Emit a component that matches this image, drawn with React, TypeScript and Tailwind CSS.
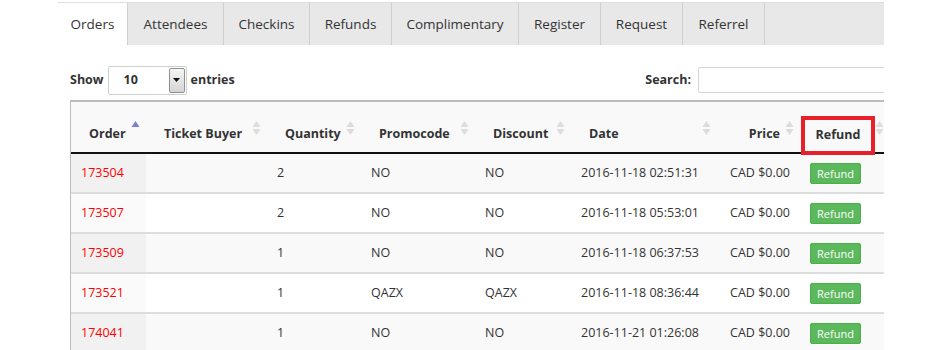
import React from 'react';

const tabs = ['Orders', 'Attendees', 'Checkins', 'Refunds', 'Complimentary', 'Register', 'Request', 'Referrel'];
const tabWidths = ['w-[70px]', 'w-[96px]', 'w-[86px]', 'w-[82px]', 'w-[127px]', 'w-[82px]', 'w-[82px]', 'w-[82px]'];

const rows = [
    { order: '173504', qty: '2', promo: 'NO', discount: 'NO', date: '2016-11-18 02:51:31' },
    { order: '173507', qty: '2', promo: 'NO', discount: 'NO', date: '2016-11-18 05:53:01' },
    { order: '173509', qty: '1', promo: 'NO', discount: 'NO', date: '2016-11-18 06:37:53' },
    { order: '173521', qty: '1', promo: 'QAZX', discount: 'QAZX', date: '2016-11-18 08:36:44' },
    { order: '174041', qty: '1', promo: 'NO', discount: 'NO', date: '2016-11-21 01:26:08' },
];

const SortIcon = ({ active }: { active?: boolean }) => (
    <svg width="9" height="16" viewBox="0 0 9 16" className="shrink-0">
        <path d="M4.5 1 L8.5 7 L0.5 7 Z" fill={active ? '#7b7fd6' : '#dcdcdc'} />
        {!active && <path d="M4.5 15 L8.5 9 L0.5 9 Z" fill="#dcdcdc" />}
    </svg>
);

const headers = [
    { label: 'Order', w: 'w-[75px]', active: true },
    { label: 'Ticket Buyer', w: 'w-[121px]' },
    { label: 'Quantity', w: 'w-[94px]' },
    { label: 'Promocode', w: 'w-[114px]' },
    { label: 'Discount', w: 'w-[96px]' },
    { label: 'Date', w: 'w-[146px]' },
    { label: 'Price', w: 'w-[83px]', right: true },
    { label: 'Refund', w: 'w-[100px]', boxed: true },
];

export default function App() {
    return (
        <div className="w-[950px] h-[350px] bg-white overflow-hidden font-['Open_Sans',sans-serif] text-[#333]">
            <div className="ml-[58px] w-[826px] overflow-hidden">
                {/* Tabs */}
                <div className="mt-[2px] h-[43px] flex bg-[#e8e8e8] border-t border-[#dedede]">
                    {tabs.map((t, i) => (
                        <div
                            key={t}
                            className={`${tabWidths[i]} h-full flex items-center justify-center text-[13.5px] border-r border-[#cfcfcf] ${i === 0 ? 'bg-white' : ''}`}
                        >
                            {t}
                        </div>
                    ))}
                </div>

                {/* Controls */}
                <div className="mt-[20px] flex items-center justify-between pl-[12px] h-[30px]">
                    <div className="flex items-center gap-[4px] text-[12.5px] font-bold">
                        <span>Show</span>
                        <div className="relative w-[79px] h-[29px] border border-[#cfcfcf] rounded-[2px] bg-white flex items-center">
                            <span className="ml-[15px] text-[12.5px] font-bold text-[#333]">10</span>
                            <div className="absolute right-[1px] top-[1px] bottom-[1px] w-[16px] border border-[#8f8f8f] rounded-[2px] bg-gradient-to-b from-[#f6f6f6] to-[#d4d4d4] flex items-center justify-center">
                                <svg width="7" height="4" viewBox="0 0 7 4"><path d="M0 0 L7 0 L3.5 4 Z" fill="#111" /></svg>
                            </div>
                        </div>
                        <span>entries</span>
                    </div>
                    <div className="flex items-center gap-[7px] text-[12.5px] font-bold">
                        <span>Search:</span>
                        <div className="w-[200px] h-[26px] border border-[#d4d4d4] rounded-[2px] bg-white -mr-[14px]" />
                    </div>
                </div>

                {/* Table */}
                <div className="mt-[5px] ml-[12px] w-[830px] border-l border-t-2 border-[#bdbdbd]">
                    <div className="flex h-[52px] bg-[#f9f9f9] border-b-2 border-[#111]">
                        {headers.map((h) => (
                            <div key={h.label} className={`${h.w} relative flex items-end pb-[8px] text-[12.5px] font-bold ${h.right ? 'justify-end pr-[6px]' : 'pl-[18px] pr-[6px] justify-between'}`}>
                                {h.boxed ? (
                                    <div className="absolute left-[1px] top-[14px] w-[74px] h-[39px] border-[4px] border-[#e8202a] flex items-center justify-center">
                                        <span>{h.label}</span>
                                    </div>
                                ) : (
                                    <span className={h.right ? 'mr-[5px]' : ''}>{h.label}</span>
                                )}
                                <div className={`self-start mt-[18px] ${h.boxed ? 'absolute left-[75px] top-0' : ''}`}>
                                    <SortIcon active={h.active} />
                                </div>
                            </div>
                        ))}
                    </div>
                    {rows.map((r, i) => (
                        <div key={r.order} className={`flex h-[40px] text-[12.5px] border-b-2 border-[#dddddd] ${i % 2 === 0 ? 'bg-[#f9f9f9]' : 'bg-white'}`}>
                            <div className={`w-[75px] pl-[10px] flex items-center text-[#ff0000] ${i % 2 === 0 ? 'bg-[#f1f1f1]' : 'bg-[#fafafa]'}`}>{r.order}</div>
                            <div className="w-[121px]" />
                            <div className="w-[94px] pl-[10px] flex items-center">{r.qty}</div>
                            <div className="w-[114px] pl-[10px] flex items-center">{r.promo}</div>
                            <div className="w-[96px] pl-[10px] flex items-center">{r.discount}</div>
                            <div className="w-[146px] pl-[10px] flex items-center">{r.date}</div>
                            <div className="w-[83px] pr-[10px] flex items-center justify-end">CAD $0.00</div>
                            <div className="w-[100px] pl-[10px] flex items-center">
                                <button className="w-[51px] h-[21px] rounded-[2px] bg-[#5cb85c] border border-[#4cae4c] text-white text-[11px] leading-none">Refund</button>
                            </div>
                        </div>
                    ))}
                </div>
            </div>
        </div>
    );
}
